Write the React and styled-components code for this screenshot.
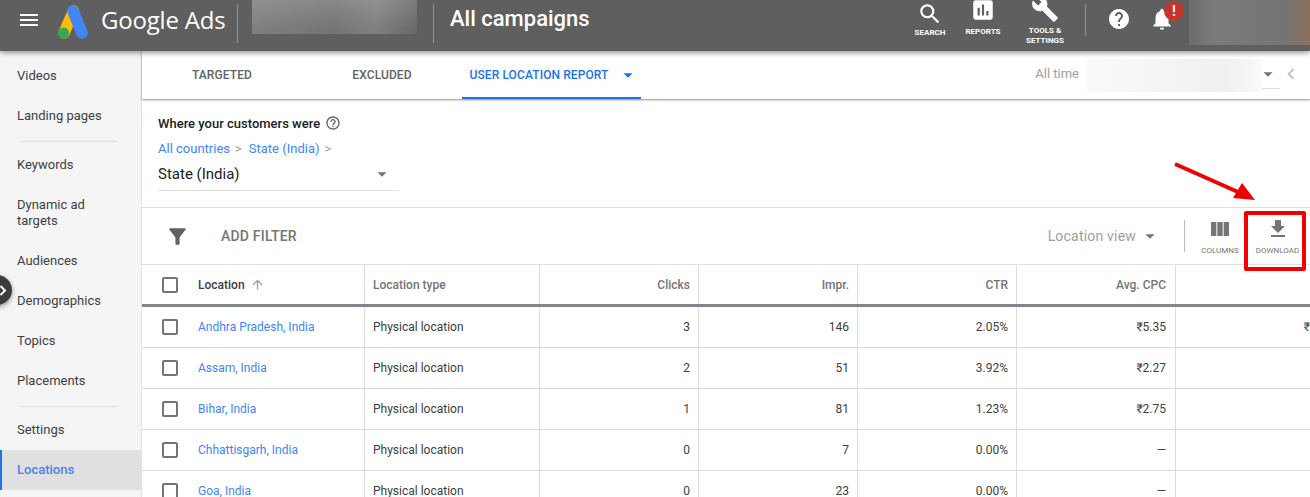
import React from 'react';
import styled, { createGlobalStyle } from 'styled-components';
import {
  MdMenu, MdSearch, MdAssessment, MdBuild, MdHelp, MdNotifications, MdViewColumn,
  MdFileDownload, MdFilterAlt, MdHelpOutline, MdArrowUpward, MdChevronLeft, MdArrowDropDown,
} from 'react-icons/md';

const GlobalStyle = createGlobalStyle`
  html, body {
    margin: 0;
    height: 100%;
    overflow: hidden;
    background: #ffffff;
    font-family: Roboto, "Liberation Sans", sans-serif;
  }
  * { box-sizing: border-box; }
`;

const Page = styled.div`
  position: relative;
  width: 1310px;
  height: 497px;
  overflow: hidden;
`;

const Header = styled.header`
  position: relative;
  z-index: 3;
  display: flex;
  align-items: flex-start;
  height: 51px;
  background: #5f5f5f;
  box-shadow: 0 2px 5px rgba(0, 0, 0, 0.4);
  color: #ffffff;
  overflow: hidden;
`;

const MenuButton = styled.div`
  display: flex;
  width: 58px;
  padding: 8px 0 0 17px;
  font-size: 24px;
`;

const LogoMark = styled.svg`
  width: 30px;
  height: 34px;
  margin-top: 5px;
  flex: none;
`;

const LogoText = styled.div`
  width: 149px;
  padding-left: 13px;
  font-family: "Open Sans", sans-serif;
  font-size: 24px;
  line-height: 40px;
  letter-spacing: -0.2px;
  white-space: nowrap;
`;

const HeaderRule = styled.div`
  flex: none;
  width: 1px;
  height: ${(p) => p.$h}px;
  margin-top: 4px;
  margin-left: ${(p) => p.$ml || 0}px;
  background: #909090;
`;

const BlurBox = styled.div`
  flex: none;
  width: 165px;
  height: 34px;
  margin: 0 16px 0 14px;
  background:
    linear-gradient(180deg, rgba(255, 255, 255, 0.14), rgba(255, 255, 255, 0) 85%),
    linear-gradient(90deg, #7f7f7f 0%, #747474 50%, #808080 75%, #686868 100%);
`;

const PageTitle = styled.div`
  padding-left: 16px;
  font-size: 22px;
  font-weight: 500;
  line-height: 38px;
  white-space: nowrap;
`;

const HeaderRight = styled.div`
  display: flex;
  align-items: flex-start;
  margin-left: auto;
  width: 405px;
`;

const NavButton = styled.div`
  flex: none;
  display: flex;
  flex-direction: column;
  align-items: center;
  width: ${(p) => p.$w}px;
  height: 51px;
  font-size: 8px;
  font-weight: 700;
  line-height: 10px;
  text-align: center;
  text-transform: uppercase;
`;

const NavIcon = styled.div`
  display: flex;
  height: 26px;
  margin-top: ${(p) => p.$top}px;
  margin-bottom: ${(p) => p.$gap}px;
  font-size: ${(p) => p.$size}px;
`;

const RoundIcon = styled.div`
  position: relative;
  flex: none;
  display: flex;
  justify-content: center;
  width: ${(p) => p.$w}px;
  margin-left: ${(p) => p.$ml}px;
  padding-top: 6px;
  font-size: 26px;
`;

const AlertBadge = styled.span`
  position: absolute;
  top: 1px;
  left: 15px;
  width: 20px;
  height: 20px;
  border-radius: 50%;
  background: #c5352a;
  font-size: 14px;
  font-weight: 700;
  line-height: 20px;
  text-align: center;
`;

const AccountBlur = styled.div`
  flex: none;
  width: 121px;
  height: 45px;
  margin-left: 14px;
  background: linear-gradient(90deg, #6b6b6b 0%, #7b7b7b 20%, #747474 80%, #8d705a 100%);
`;

const Body = styled.div`
  display: flex;
  height: 446px;
`;

const Sidebar = styled.nav`
  flex: none;
  width: 142px;
  padding-top: 5px;
  background: #f5f5f5;
  border-right: 1px solid #e3e3e3;
`;

const SideItem = styled.div`
  display: flex;
  align-items: center;
  padding: ${(p) => (p.$tall ? '0 30px 0 17px' : '0 17px')};
  height: ${(p) => (p.$tall ? 56 : 40)}px;
  font-size: 13px;
  line-height: 16px;
  color: ${(p) => (p.$active ? '#4285f4' : '#3c4043')};
  font-weight: ${(p) => (p.$active ? 500 : 400)};
  background: ${(p) => (p.$active ? '#e0e0e0' : 'transparent')};
  box-shadow: ${(p) => (p.$active ? 'inset 2px 0 0 #1a73e8' : 'none')};
`;

const SideRule = styled.div`
  height: 1px;
  margin: 5px 24px 3px 21px;
  background: #dcdcdc;
`;

const Main = styled.main`
  flex: 1;
  min-width: 0;
  display: flex;
  flex-direction: column;
`;

const TabBar = styled.div`
  position: relative;
  z-index: 2;
  flex: none;
  display: flex;
  height: 48px;
  background: #ffffff;
  box-shadow: 0 1px 2px rgba(0, 0, 0, 0.45);
`;

const Tab = styled.div`
  flex: none;
  display: flex;
  align-items: center;
  justify-content: center;
  gap: 8px;
  width: ${(p) => p.$w}px;
  padding-top: 1px;
  font-size: 12px;
  font-weight: 500;
  letter-spacing: 0.1px;
  color: ${(p) => (p.$active ? '#1a73e8' : '#5f6368')};
  border-bottom: 2px solid ${(p) => (p.$active ? '#1a73e8' : 'transparent')};
  svg { font-size: 22px; margin-right: -5px; }
`;

const DateRange = styled.div`
  display: flex;
  align-items: flex-start;
  margin-left: auto;
  padding: 8px 8px 0 0;
  color: #9e9e9e;
  font-size: 13px;
`;

const DateLabel = styled.span`
  line-height: 30px;
  margin-right: 7px;
`;

const DateBlur = styled.div`
  width: 176px;
  height: 33px;
  background: linear-gradient(90deg, #fafafa, #f2f2f2 60%, #f0f0f0 80%, #fafafa);
`;

const DateCaret = styled.div`
  display: flex;
  justify-content: flex-start;
  width: 18px;
  height: 30px;
  padding-top: 4px;
  color: #757575;
  font-size: 22px;
  border-bottom: 1px solid #e0e0e0;
  svg { margin-left: -5px; }
`;

const BackIcon = styled.div`
  display: flex;
  width: 22px;
  padding-top: 3px;
  justify-content: center;
  font-size: 24px;
  color: #bdbdbd;
`;

const GeoPanel = styled.section`
  flex: none;
  height: 109px;
  padding: 16px 16px 0;
  border-bottom: 1px solid #e0e0e0;
`;

const GeoTitle = styled.div`
  display: flex;
  align-items: center;
  gap: 5px;
  height: 16px;
  font-size: 13px;
  font-weight: 500;
  color: #202124;
  svg { font-size: 16px; color: #5f6368; }
`;

const Crumbs = styled.div`
  display: flex;
  gap: 5px;
  margin-top: 10px;
  font-size: 13px;
  line-height: 16px;
  color: #4285f4;
`;

const CrumbSep = styled.span`
  color: #9e9e9e;
  margin-right: 2px;
`;

const GeoSelect = styled.div`
  display: flex;
  align-items: center;
  justify-content: space-between;
  width: 240px;
  height: 34px;
  padding-right: 5px;
  font-size: 15px;
  color: #202124;
  border-bottom: 1px solid #e0e0e0;
  svg { font-size: 22px; color: #757575; }
`;

const FilterBar = styled.div`
  flex: none;
  display: flex;
  align-items: center;
  height: 57px;
  padding: 0 10px 0 24px;
  border-bottom: 1px solid #e0e0e0;
`;

const FilterIcon = styled.div`
  display: flex;
  width: 56px;
  font-size: 25px;
  color: #616161;
  margin-left: -1px;
`;

const AddFilter = styled.div`
  font-size: 14px;
  font-weight: 500;
  letter-spacing: 0.2px;
  color: #757575;
`;

const ViewSelect = styled.div`
  display: flex;
  align-items: center;
  gap: 3px;
  margin-left: auto;
  margin-right: 23px;
  font-size: 14px;
  letter-spacing: 0.2px;
  color: #9e9e9e;
  svg { font-size: 22px; color: #757575; }
`;

const BarRule = styled.div`
  width: 1px;
  height: 32px;
  background: #bdbdbd;
`;

const ToolButton = styled.div`
  flex: none;
  display: flex;
  flex-direction: column;
  align-items: center;
  width: ${(p) => p.$w}px;
  font-size: 8px;
  line-height: 10px;
  color: #757575;
  svg { font-size: 24px; margin-bottom: 5px; }
`;

const Table = styled.div`
  flex: none;
  width: 1177px;
`;

const Row = styled.div`
  display: grid;
  grid-template-columns: 223px 175px 159px 159px 159px 159px 143px;
  height: ${(p) => (p.$head ? 42 : 41)}px;
  border-bottom: ${(p) => (p.$head ? '3px solid #80868b' : '1px solid #dadce0')};
`;

const Cell = styled.div`
  display: flex;
  align-items: center;
  justify-content: ${(p) => (p.$right ? 'flex-end' : 'flex-start')};
  min-width: 0;
  padding: 0 ${(p) => (p.$edge ? 9 : 8)}px 0 8px;
  border-right: 1px solid #dadce0;
  font-size: 12px;
  font-weight: ${(p) => (p.$head ? 500 : 400)};
  color: ${(p) => (p.$head ? '#757575' : '#3c4043')};
  white-space: nowrap;
  &:last-child { border-right: none; }
`;

const NameCell = styled(Cell)`
  padding: 0 0 0 20px;
  gap: 20px;
`;

const Check = styled.span`
  flex: none;
  width: 16px;
  height: 16px;
  border: 2px solid #757575;
  border-radius: 2px;
`;

const SortTitle = styled.span`
  display: flex;
  align-items: center;
  gap: 5px;
  color: #3c4043;
  svg { font-size: 15px; color: #9e9e9e; }
`;

const Place = styled.span`
  color: #4285f4;
`;

// things drawn on top of the page
const CollapseButton = styled.div`
  position: absolute;
  left: -18px;
  top: 275px;
  z-index: 4;
  width: 30px;
  height: 30px;
  border-radius: 50%;
  background: #3c3c3c;
  box-shadow: 0 2px 5px rgba(0, 0, 0, 0.4);
`;

const CollapseGlyph = styled.svg`
  position: absolute;
  left: 17px;
  top: 10px;
  width: 8px;
  height: 11px;
`;

const RedBox = styled.div`
  position: absolute;
  left: 1244px;
  top: 211px;
  z-index: 5;
  width: 62px;
  height: 60px;
  border: 4px solid #f00000;
  border-radius: 2px;
`;

const RedArrow = styled.svg`
  position: absolute;
  left: 1170px;
  top: 160px;
  z-index: 5;
  width: 90px;
  height: 44px;
`;

const rows = [
  ['Andhra Pradesh, India', '3', '146', '2.05%', '₹5.35', '₹'],
  ['Assam, India', '2', '51', '3.92%', '₹2.27', ''],
  ['Bihar, India', '1', '81', '1.23%', '₹2.75', ''],
  ['Chhattisgarh, India', '0', '7', '0.00%', '—', ''],
  ['Goa, India', '0', '23', '0.00%', '—', ''],
];

const App = () => {
  return (
    <Page>
      <GlobalStyle />
      <Header>
        <MenuButton><MdMenu /></MenuButton>
        <LogoMark viewBox="0 0 30 34">
          <path d="M15.5 6 L6 28" stroke="#fbbc04" strokeWidth="11.5" strokeLinecap="round" />
          <path d="M15 6 L24 28" stroke="#4285f4" strokeWidth="11.5" strokeLinecap="round" />
          <circle cx="5.5" cy="28" r="5.5" fill="#34a853" />
        </LogoMark>
        <LogoText>Google Ads</LogoText>
        <HeaderRule $h={39} />
        <BlurBox />
        <HeaderRule $h={39} />
        <PageTitle>All campaigns</PageTitle>
        <HeaderRight>
          <NavButton $w={50}>
            <NavIcon $top={1} $gap={1} $size={26}><MdSearch /></NavIcon>
            <span>Search</span>
          </NavButton>
          <NavButton $w={56}>
            <NavIcon $top={-3} $gap={4} $size={26}><MdAssessment /></NavIcon>
            <span>Reports</span>
          </NavButton>
          <NavButton $w={68}>
            <NavIcon $top={-5} $gap={5} $size={28}><MdBuild /></NavIcon>
            <span>Tools &amp;<br />Settings</span>
          </NavButton>
          <HeaderRule $h={32} $ml={6} />
          <RoundIcon $w={24} $ml={21}><MdHelp /></RoundIcon>
          <RoundIcon $w={26} $ml={18}>
            <MdNotifications />
            <AlertBadge>!</AlertBadge>
          </RoundIcon>
          <AccountBlur />
        </HeaderRight>
      </Header>

      <Body>
        <Sidebar>
          <SideItem>Videos</SideItem>
          <SideItem>Landing pages</SideItem>
          <SideRule />
          <SideItem>Keywords</SideItem>
          <SideItem $tall>Dynamic ad targets</SideItem>
          <SideItem>Audiences</SideItem>
          <SideItem>Demographics</SideItem>
          <SideItem>Topics</SideItem>
          <SideItem>Placements</SideItem>
          <SideRule />
          <SideItem>Settings</SideItem>
          <SideItem $active>Locations</SideItem>
        </Sidebar>

        <Main>
          <TabBar>
            <Tab $w={160}>TARGETED</Tab>
            <Tab $w={160}>EXCLUDED</Tab>
            <Tab $w={179} $active>USER LOCATION REPORT<MdArrowDropDown /></Tab>
            <DateRange>
              <DateLabel>All time</DateLabel>
              <DateBlur />
              <DateCaret><MdArrowDropDown /></DateCaret>
              <BackIcon><MdChevronLeft /></BackIcon>
            </DateRange>
          </TabBar>

          <GeoPanel>
            <GeoTitle>Where your customers were <MdHelpOutline /></GeoTitle>
            <Crumbs>
              <span>All countries</span><CrumbSep>&gt;</CrumbSep>
              <span>State (India)</span><CrumbSep>&gt;</CrumbSep>
            </Crumbs>
            <GeoSelect>State (India)<MdArrowDropDown /></GeoSelect>
          </GeoPanel>

          <FilterBar>
            <FilterIcon><MdFilterAlt /></FilterIcon>
            <AddFilter>ADD FILTER</AddFilter>
            <ViewSelect>Location view<MdArrowDropDown /></ViewSelect>
            <BarRule />
            <ToolButton $w={70}><MdViewColumn />COLUMNS</ToolButton>
            <ToolButton $w={45}><MdFileDownload />DOWNLOAD</ToolButton>
          </FilterBar>

          <Table>
            <Row $head>
              <NameCell $head>
                <Check />
                <SortTitle>Location <MdArrowUpward /></SortTitle>
              </NameCell>
              <Cell $head>Location type</Cell>
              <Cell $head $right>Clicks</Cell>
              <Cell $head $right>Impr.</Cell>
              <Cell $head $right>CTR</Cell>
              <Cell $head $right $edge>Avg. CPC</Cell>
              <Cell $head $right />
            </Row>
            {rows.map((r) => (
              <Row key={r[0]}>
                <NameCell>
                  <Check />
                  <Place>{r[0]}</Place>
                </NameCell>
                <Cell>Physical location</Cell>
                <Cell $right>{r[1]}</Cell>
                <Cell $right>{r[2]}</Cell>
                <Cell $right>{r[3]}</Cell>
                <Cell $right $edge>{r[4]}</Cell>
                <Cell $right $edge>{r[5]}</Cell>
              </Row>
            ))}
          </Table>
        </Main>
      </Body>

      <CollapseButton>
        <CollapseGlyph viewBox="0 0 8 11">
          <path d="M1.5 1 L6 5.5 L1.5 10" stroke="#ffffff" strokeWidth="2" fill="none" />
        </CollapseGlyph>
      </CollapseButton>
      <RedBox />
      <RedArrow viewBox="0 0 90 44">
        <path d="M5 4 L68 32" stroke="#f00000" strokeWidth="4" />
        <path d="M85 40 L63 38 L72 23 Z" fill="#f00000" />
      </RedArrow>
    </Page>
  );
};

export default App;
